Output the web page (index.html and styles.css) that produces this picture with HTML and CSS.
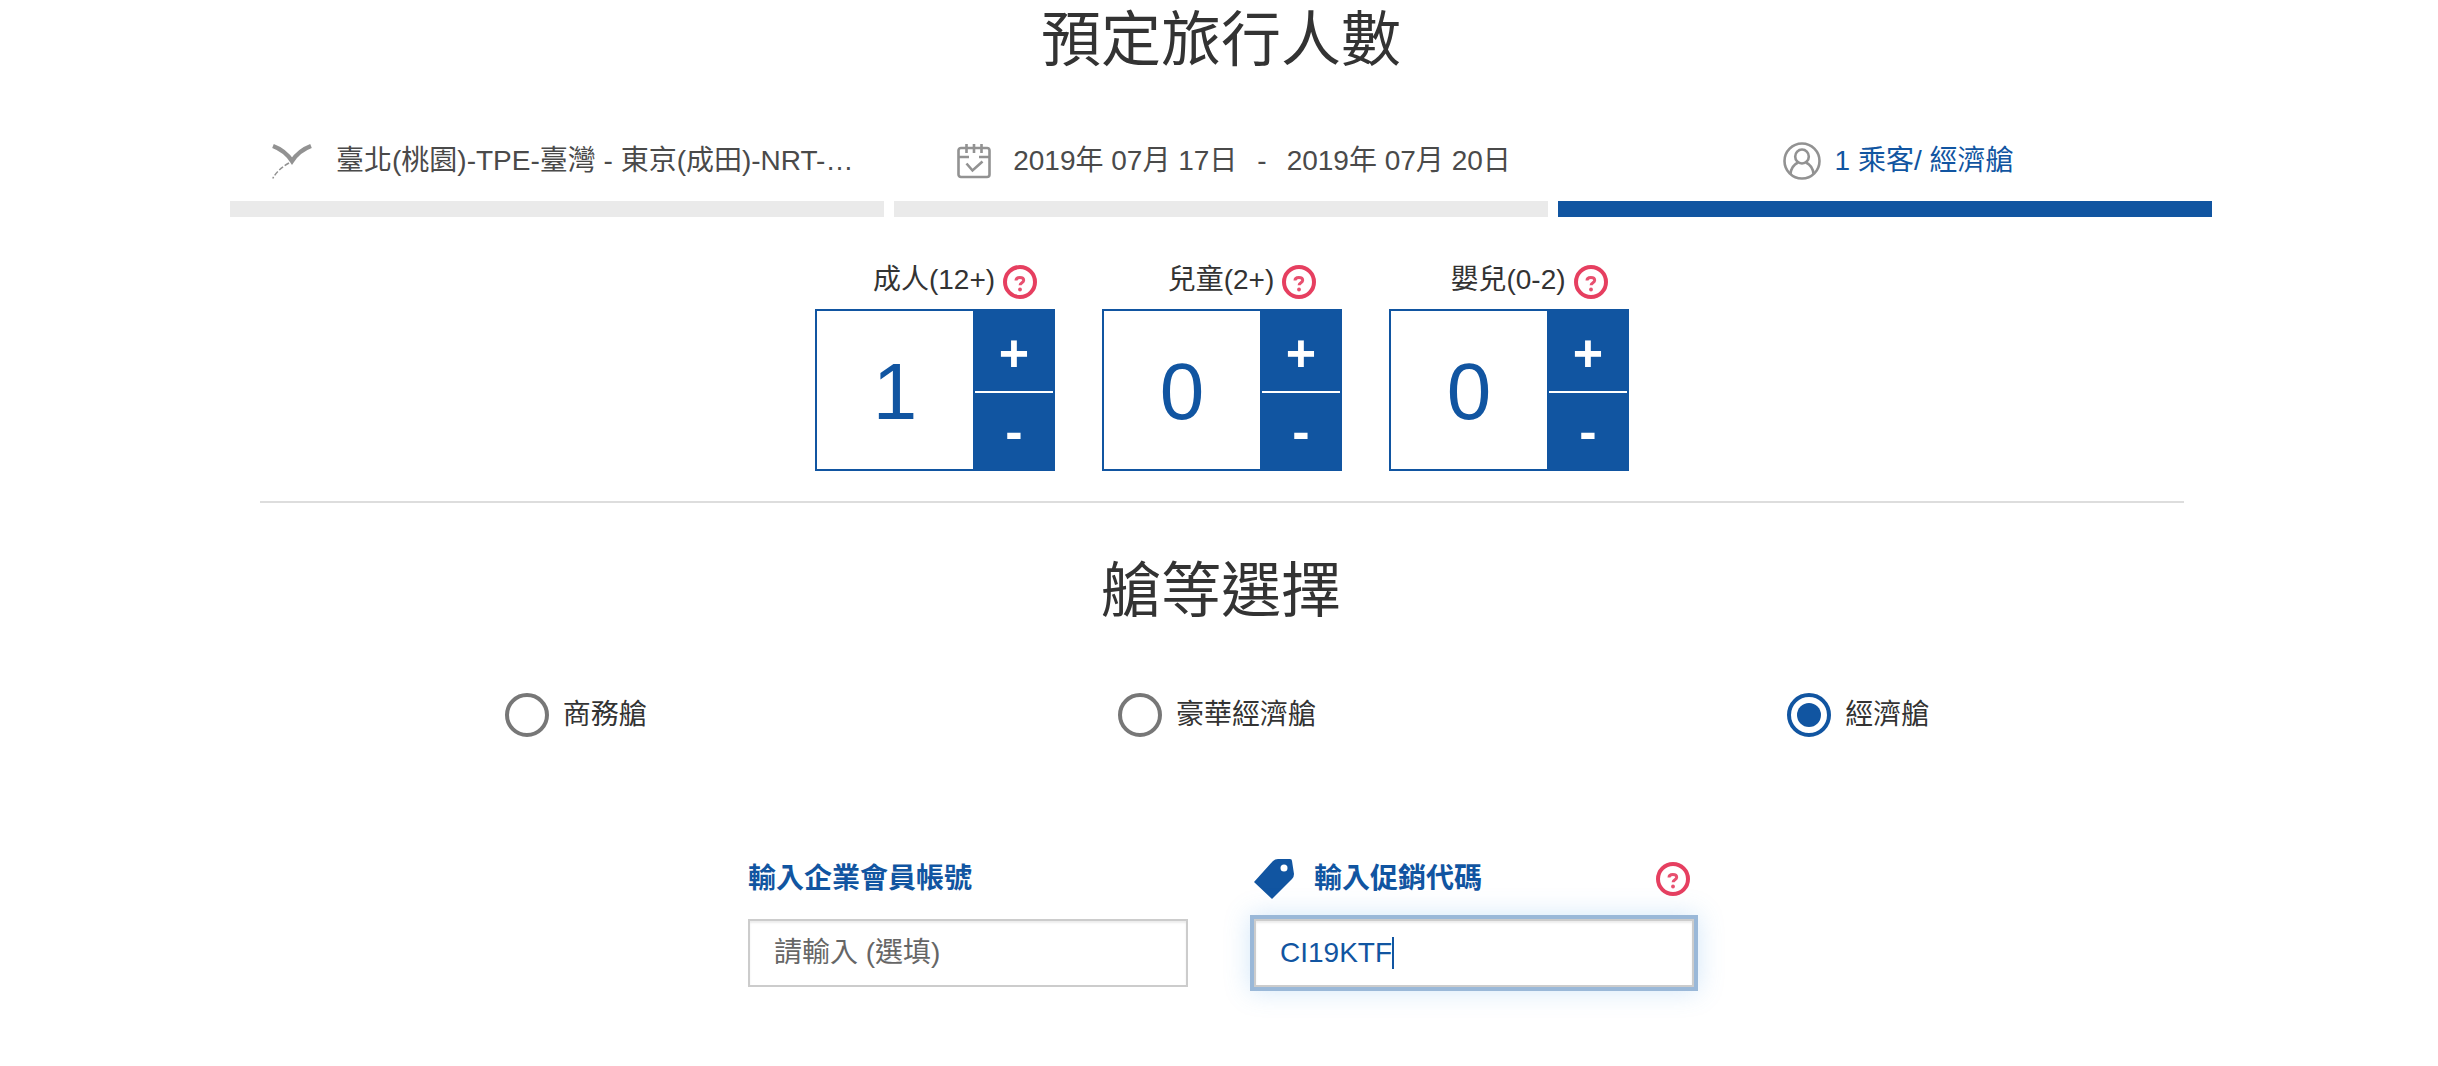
FILE: index.html
```html
<!DOCTYPE html>
<html lang="zh-Hant">
<head>
    <meta charset="UTF-8">
    <meta name="viewport" content="width=device-width, initial-scale=1.0">
    <title>預定旅行人數</title>
    <link rel="stylesheet" href="styles.css">
</head>
<body>
    <!-- shared help icon -->
    <svg class="sprite" aria-hidden="true">
        <symbol id="icon-help" viewBox="0 0 34 34">
            <circle cx="17" cy="17" r="15" fill="#fff" stroke="#e63f60" stroke-width="4"/>
            <path d="M13 15.500c0-2 1.600-3 3.800-3s3.900 1 3.900 2.800c0 2.500-3.600 2.300-3.600 5" fill="none" stroke="#e8506f" stroke-width="3"/>
            <circle cx="17" cy="24.500" r="1.900" fill="#e8506f"/>
        </symbol>
    </svg>

    <main class="page">
        <h1 class="title">預定旅行人數</h1>

        <nav class="steps">
            <a href="#route" class="step step-route">
                <svg width="40" height="36" viewBox="0 0 40 36" fill="none" stroke="#929292">
                    <path d="M1 3C9 6 16 12 20 18C24 12 31 6 39 3" stroke-width="4.500"/>
                    <path d="M17 20C10 24 4 29 .8 35.500" stroke-width="1.500" stroke-dasharray="5 2"/>
                </svg>
                <span>臺北(桃園)-TPE-臺灣 - 東京(成田)-NRT-…</span>
            </a>
            <a href="#dates" class="step step-dates">
                <svg width="34" height="36" viewBox="0 0 34 36" fill="none" stroke="#929292" stroke-width="2.600">
                    <rect x="1.500" y="5" width="31" height="29" rx="2.500"/>
                    <path d="M9.500 1v9M17 1v9M24.500 1v9"/>
                    <path d="M2 14h10M22 14h10"/>
                    <path d="M9.500 20.500l6 7L25.500 18.500"/>
                </svg>
                <span class="dates"><span>2019年 07月 17日</span><span>-</span><span>2019年 07月 20日</span></span>
            </a>
            <a href="#passengers" class="step step-passengers active">
                <svg width="38" height="38" viewBox="0 0 38 38" fill="none" stroke="#929292" stroke-width="2.600">
                    <circle cx="19" cy="19" r="17.500"/>
                    <ellipse cx="19" cy="14.500" rx="6.800" ry="7"/>
                    <path d="M7.500 32C8 25.500 11 22.500 15 20.500M30.500 32C30 25.500 27 22.500 23 20.500"/>
                </svg>
                <span>1 乘客/ 經濟艙</span>
            </a>
        </nav>

        <form>
            <div class="passengers">
                <div class="passenger">
                    <div class="passenger-label">
                        <label for="adults">成人(12+)</label>
                        <button type="button" class="help" aria-label="成人說明"><svg><use href="#icon-help"/></svg></button>
                    </div>
                    <div class="counter">
                        <input type="text" id="adults" name="adults" value="1">
                        <div class="counter-buttons">
                            <button type="button">+</button>
                            <button type="button">-</button>
                        </div>
                    </div>
                </div>
                <div class="passenger">
                    <div class="passenger-label">
                        <label for="children">兒童(2+)</label>
                        <button type="button" class="help" aria-label="兒童說明"><svg><use href="#icon-help"/></svg></button>
                    </div>
                    <div class="counter">
                        <input type="text" id="children" name="children" value="0">
                        <div class="counter-buttons">
                            <button type="button">+</button>
                            <button type="button">-</button>
                        </div>
                    </div>
                </div>
                <div class="passenger">
                    <div class="passenger-label">
                        <label for="infants">嬰兒(0-2)</label>
                        <button type="button" class="help" aria-label="嬰兒說明"><svg><use href="#icon-help"/></svg></button>
                    </div>
                    <div class="counter">
                        <input type="text" id="infants" name="infants" value="0">
                        <div class="counter-buttons">
                            <button type="button">+</button>
                            <button type="button">-</button>
                        </div>
                    </div>
                </div>
            </div>

            <h2 class="title cabin-title">艙等選擇</h2>
            <div class="cabins">
                <div class="cabin">
                    <input type="radio" id="business" name="cabin">
                    <label for="business">商務艙</label>
                </div>
                <div class="cabin">
                    <input type="radio" id="premium" name="cabin">
                    <label for="premium">豪華經濟艙</label>
                </div>
                <div class="cabin">
                    <input type="radio" id="economy" name="cabin" checked>
                    <label for="economy">經濟艙</label>
                </div>
            </div>

            <div class="codes">
                <div class="field">
                    <div class="field-label">
                        <label for="company">輸入企業會員帳號</label>
                    </div>
                    <input type="text" id="company" name="company" placeholder="請輸入 (選填)">
                </div>
                <div class="field">
                    <div class="field-label">
                        <svg class="tag" width="40" height="40" viewBox="0 0 40 40">
                            <path d="M0 23L19 2Q21 0 24 0H36Q38 0 38 2L40 15Q40 18 38 20L18 40Z" fill="#1155a1"/>
                            <circle cx="30" cy="9" r="3.500" fill="#fff"/>
                        </svg>
                        <label for="promo">輸入促銷代碼</label>
                        <button type="button" class="help" aria-label="促銷代碼說明"><svg><use href="#icon-help"/></svg></button>
                    </div>
                    <div class="promo">
                        <input type="text" id="promo" name="promo" value="CI19KTF">
                        <span class="caret"></span>
                    </div>
                </div>
            </div>
        </form>
    </main>
</body>
</html>
```
FILE: styles.css
```css
* {
    margin: 0;
    padding: 0;
    box-sizing: border-box;
}

body {
    font-family: "Liberation Sans", "Noto Sans CJK TC", sans-serif;
    font-size: 28px;
    line-height: 40px;
    color: #333;
    background-color: #fff;
}

input, button {
    font-family: inherit;
    font-size: inherit;
}

button {
    border: none;
    cursor: pointer;
}

.sprite {
    display: none;
}

.page {
    padding: 0 226px 40px 230px;
}

.title {
    font-size: 60px;
    line-height: 82px;
    font-weight: normal;
    text-align: center;
}

/* steps */
.steps {
    display: grid;
    grid-template-columns: repeat(3, 1fr);
    gap: 10px;
    margin-top: 38px;
}

.step {
    display: flex;
    justify-content: center;
    align-items: center;
    height: 97px;
    padding-left: 26px;
    border-bottom: 16px solid #eaeaea;
    color: #4a4a4a;
    text-decoration: none;
    white-space: nowrap;
}

.step svg {
    flex-shrink: 0;
}

.step-route {
    justify-content: flex-start;
    gap: 24px;
    padding-left: 42px;
}

.step-dates {
    gap: 22px;
}

.dates {
    display: flex;
    gap: 20px;
}

.step-passengers {
    gap: 14px;
}

.step.active {
    border-color: #1155a1;
    color: #1155a1;
}

/* passengers */
.passengers {
    display: flex;
    justify-content: center;
    gap: 47px;
    margin: 0 28px 0 30px;
    padding: 48px 0 30px;
    border-bottom: 2px solid #ddd;
}

.passenger {
    width: 240px;
}

.passenger-label {
    display: flex;
    justify-content: center;
    align-items: center;
    gap: 8px;
    height: 34px;
    margin-bottom: 10px;
    padding-left: 40px;
}

.passenger-label label {
    padding-bottom: 4px;
}

.help {
    width: 34px;
    height: 34px;
    background: none;
}

.help svg {
    display: block;
    width: 34px;
    height: 34px;
}

.counter {
    display: flex;
    height: 162px;
    border: 2px solid #1155a1;
}

.counter input {
    flex: 1;
    min-width: 0;
    padding-top: 4px;
    border: none;
    color: #1155a1;
    font-size: 80px;
    text-align: center;
}

.counter-buttons {
    display: flex;
    flex-direction: column;
    gap: 2px;
    width: 80px;
    border-left: 2px solid #1155a1;
}

.counter-buttons button {
    flex: 1;
    background-color: #1155a1;
    color: #fff;
    font-size: 52px;
    font-weight: bold;
    line-height: 52px;
}

.counter-buttons button:first-child {
    padding-top: 4px;
}

/* cabin class */
.cabin-title {
    margin-top: 48px;
}

.cabins {
    display: grid;
    grid-template-columns: repeat(3, 1fr);
    margin: 60px 28px 0 30px;
}

.cabin {
    display: flex;
    justify-content: center;
    align-items: center;
    gap: 14px;
    padding-right: 10px;
}

.cabin input {
    appearance: none;
    width: 44px;
    height: 44px;
    border: 4px solid #777;
    border-radius: 50%;
}

.cabin input:checked {
    padding: 6px;
    border-color: #1155a1;
}

.cabin input:checked::before {
    content: "";
    display: block;
    height: 24px;
    border-radius: 50%;
    background-color: #1155a1;
}

/* member account and promotion code */
.codes {
    display: flex;
    justify-content: center;
    gap: 66px;
    margin-top: 122px;
}

.field {
    width: 440px;
}

.field-label {
    display: flex;
    align-items: center;
    height: 40px;
    margin-bottom: 20px;
    color: #1155a1;
    font-weight: bold;
}

.field-label .tag {
    margin-right: 20px;
}

.field-label .help {
    margin: 0 4px 0 auto;
}

.field input {
    display: block;
    width: 100%;
    height: 68px;
    padding: 0 24px;
    border: 2px solid #ccc;
    color: #1155a1;
    box-shadow: inset 0 2px 2px rgba(0, 0, 0, 0.08);
}

.field input::placeholder {
    color: #666;
}

.promo {
    position: relative;
}

.promo input {
    caret-color: transparent;
    box-shadow: inset 0 2px 2px rgba(0, 0, 0, 0.08), 0 0 0 4px #9ab8d8, 0 0 24px 4px rgba(80, 160, 230, 0.25);
}

.caret {
    position: absolute;
    top: 18px;
    left: 138px;
    width: 2px;
    height: 32px;
    background-color: #1155a1;
}
```
